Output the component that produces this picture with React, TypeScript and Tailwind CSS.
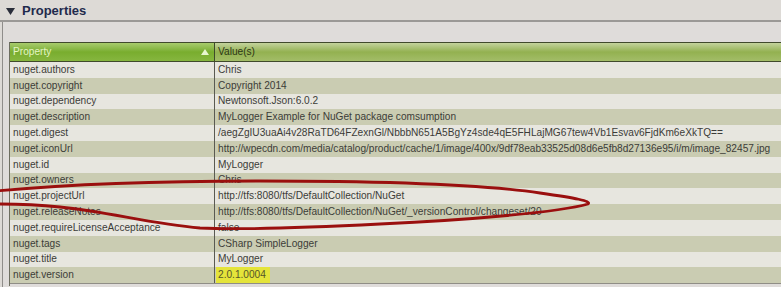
import React from 'react';

const ROWS: [string, string][] = [
  ['nuget.authors', 'Chris'],
  ['nuget.copyright', 'Copyright 2014'],
  ['nuget.dependency', 'Newtonsoft.Json:6.0.2'],
  ['nuget.description', 'MyLogger Example for NuGet package comsumption'],
  ['nuget.digest', '/aegZgIU3uaAi4v28RaTD64FZexnGl/NbbbN651A5BgYz4sde4qE5FHLajMG67tew4Vb1Esvav6FjdKm6eXkTQ=='],
  ['nuget.iconUrl', 'http://wpecdn.com/media/catalog/product/cache/1/image/400x/9df78eab33525d08d6e5fb8d27136e95/i/m/image_82457.jpg'],
  ['nuget.id', 'MyLogger'],
  ['nuget.owners', 'Chris'],
  ['nuget.projectUrl', 'http://tfs:8080/tfs/DefaultCollection/NuGet'],
  ['nuget.releaseNotes', 'http://tfs:8080/tfs/DefaultCollection/NuGet/_versionControl/changeset/20'],
  ['nuget.requireLicenseAcceptance', 'false'],
  ['nuget.tags', 'CSharp SimpleLogger'],
  ['nuget.title', 'MyLogger'],
  ['nuget.version', '2.0.1.0004'],
];

export default function App() {
  return (
    <div className="relative w-[781px] h-[287px] overflow-hidden bg-[#dddad6] font-['Liberation_Sans',Arial,sans-serif] text-[#3c3c38]">
      {/* Section header */}
      <div className="flex h-[20px] items-center gap-[7px] pl-[6px]">
        <svg width="9" height="7" viewBox="0 0 9 7" className="mt-[3px]">
          <path d="M0 0 L9 0 L4.5 7 Z" fill="#2a2e3a" />
        </svg>
        <span className="mt-[1px] text-[13px] font-bold text-[#1f2a4c]">Properties</span>
      </div>
      <div className="h-[2px] bg-[#9b9996]" />

      {/* Panel body */}
      <div className="ml-[2px] h-[265px] border-l border-[#8f8d8a] bg-[#dfdcda] pl-[6px] pt-[20px]">
        <div className="w-[800px] border-l border-[#6d6e60] text-[10.15px] leading-none">
          {/* Table header */}
          <div className="flex h-[20px] border-y border-[#404a2c]">
            <div className="flex w-[204px] items-center justify-between bg-gradient-to-b from-[#a8cc6c] via-[#79ad2e] to-[#86b63f] pl-[3px] pr-[5px] text-[#e4f5c4]">
              <span>Property</span>
              <svg width="8" height="6" viewBox="0 0 8 6">
                <path d="M4 0 L8 6 L0 6 Z" fill="#e8f6cf" />
              </svg>
            </div>
            <div className="flex flex-1 items-center border-l border-[#3e4a2a] bg-gradient-to-b from-[#c4d39c] via-[#93b150] to-[#a3bd68] pl-[3px] text-[#2b3515]">
              Value(s)
            </div>
          </div>

          {/* Rows */}
          {ROWS.map(([name, value], i) => (
            <div
              key={name}
              className={
                'flex h-[15.8px] ' + (i % 2 === 0 ? 'bg-[#e7e6df]' : 'bg-[#caccb2]')
              }
            >
              <div className="flex w-[204px] items-center pl-[3px] whitespace-nowrap">{name}</div>
              <div className="flex flex-1 items-center border-l border-[#5a5a52] pl-[3px] whitespace-nowrap">
                {name === 'nuget.version' ? (
                  <span className="-ml-[2px] flex h-[16px] items-center bg-[#e4e43a] px-[2px] pr-[4px] text-[#55552a]">
                    {value}
                  </span>
                ) : (
                  value
                )}
              </div>
            </div>
          ))}
          <div className="h-[3px] border-t border-[#8f8d86]" />
        </div>
      </div>

      {/* Hand-drawn red ellipse */}
      <svg
        className="pointer-events-none absolute left-0 top-0"
        width="781"
        height="287"
        viewBox="0 0 781 287"
      >
        <path
          d="M-4 191 C 60 185, 140 181, 260 181 C 380 181, 480 184, 540 193 C 575 198, 592 201, 588 204 C 560 212, 470 220, 380 224 C 300 228, 240 230, 200 228 C 150 224, 110 212, 60 207 C 30 204, 10 204, -4 204"
          fill="none"
          stroke="#9a0f0e"
          strokeWidth="2.8"
          strokeLinecap="round"
        />
      </svg>
    </div>
  );
}
